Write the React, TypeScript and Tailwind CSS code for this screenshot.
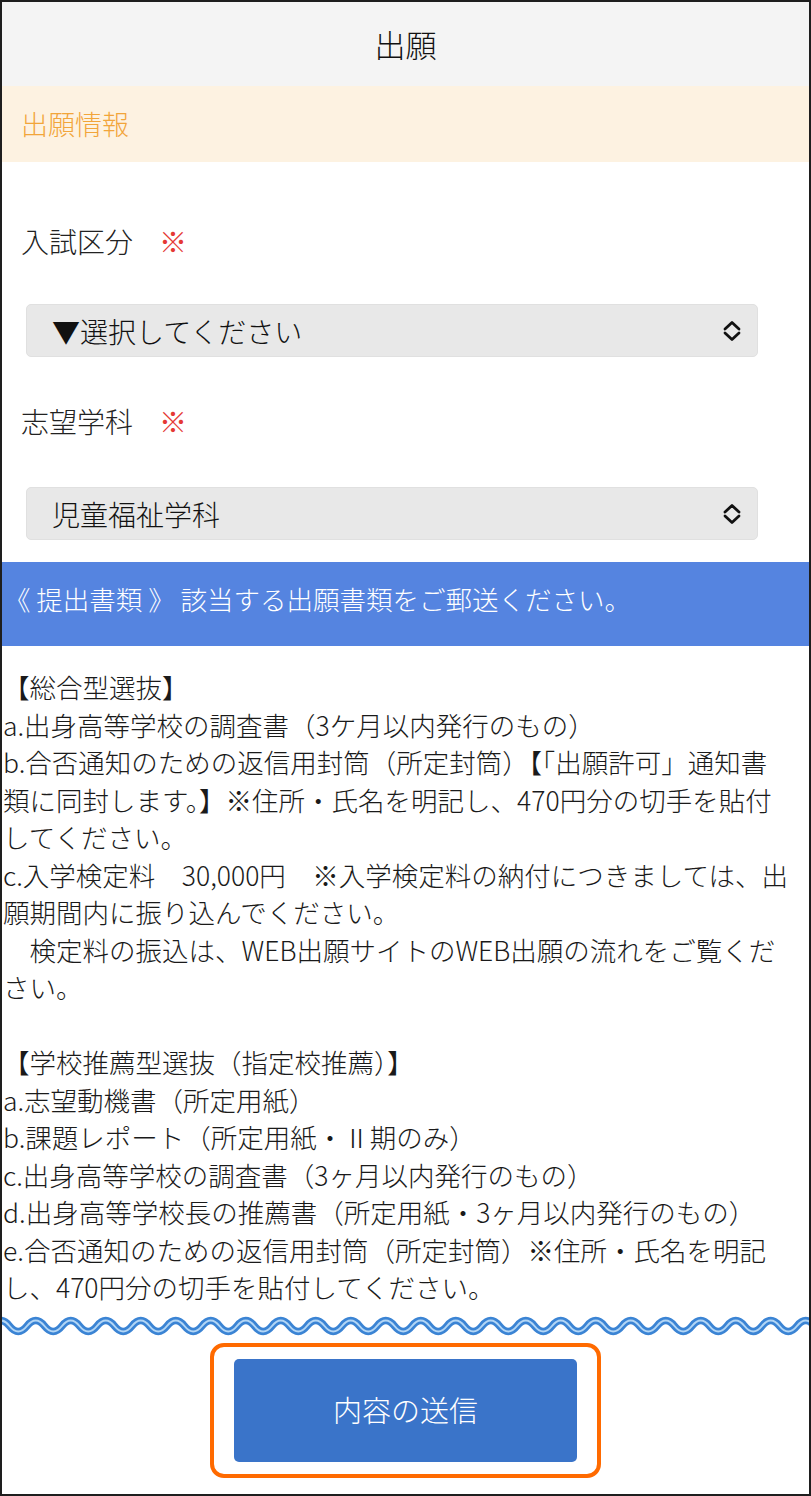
import React from 'react';

const lines: string[] = [
  '【総合型選抜】',
  'a.出身高等学校の調査書（3ケ月以内発行のもの）',
  'b.合否通知のための返信用封筒（所定封筒）【「出願許可」通知書',
  '類に同封します。】※住所・氏名を明記し、470円分の切手を貼付',
  'してください。',
  'c.入学検定料　30,000円　※入学検定料の納付につきましては、出',
  '願期間内に振り込んでください。',
  '　検定料の振込は、WEB出願サイトのWEB出願の流れをご覧くだ',
  'さい。',
  '',
  '【学校推薦型選抜（指定校推薦）】',
  'a.志望動機書（所定用紙）',
  'b.課題レポート（所定用紙・Ⅱ期のみ）',
  'c.出身高等学校の調査書（3ヶ月以内発行のもの）',
  'd.出身高等学校長の推薦書（所定用紙・3ヶ月以内発行のもの）',
  'e.合否通知のための返信用封筒（所定封筒）※住所・氏名を明記',
  'し、470円分の切手を貼付してください。',
];

function Chevrons() {
  return (
    <svg width="22" height="24" viewBox="0 0 22 24" fill="none" stroke="#111" strokeWidth="2.8" strokeLinecap="round" strokeLinejoin="round">
      <path d="M4 10 L11 3.5 L18 10" />
      <path d="M4 14 L11 20.5 L18 14" />
    </svg>
  );
}

function FakeSelect({ value }: { value: string }) {
  return (
    <div className="ml-[24px] w-[732px] h-[53px] rounded-[5px] bg-[#e8e8e8] border border-[#e0e0e0] flex items-center justify-between pl-[25px] pr-[14px] text-[28px] leading-[40px] text-[#111]">
      <span>{value}</span>
      <Chevrons />
    </div>
  );
}

function Wave() {
  const period = 35;
  let d = 'M-10 12';
  for (let x = -10; x < 830; x += period) {
    d += ` Q${x + period / 4} 1 ${x + period / 2} 12 Q${x + (3 * period) / 4} 23 ${x + period} 12`;
  }
  return (
    <svg width="807" height="24" viewBox="0 0 807 24" className="block">
      <path d={d} fill="none" stroke="#3b84d4" strokeWidth="7.5" />
      <path d={d} fill="none" stroke="#b3d6f5" strokeWidth="2" />
    </svg>
  );
}

export default function App() {
  return (
    <div className="w-[811px] h-[1496px] border-2 border-[#1e1e1e] bg-white flex flex-col overflow-hidden font-['Noto_Sans_CJK_JP',sans-serif] font-light text-[#1a1a1a]">
      <header className="h-[84px] shrink-0 bg-[#f4f4f4] flex items-center justify-center text-[31px] text-[#111]">
        出願
      </header>
      <div className="h-[76px] shrink-0 bg-[#fdf2e1] flex items-center pl-[19px] text-[27px] text-[#f2a53a]">
        出願情報
      </div>

      <div className="pt-[59px] flex flex-col">
        <div className="h-[40px] flex items-center pl-[19px] text-[28px] leading-[40px] text-[#222]">
          入試区分
          <span className="ml-[26px] text-[#e53935]">※</span>
        </div>
        <div className="mt-[43px]">
          <FakeSelect value="▼選択してください" />
        </div>
        <div className="mt-[44px] h-[40px] flex items-center pl-[19px] text-[28px] leading-[40px] text-[#222]">
          志望学科
          <span className="ml-[26px] text-[#e53935]">※</span>
        </div>
        <div className="mt-[46px]">
          <FakeSelect value="児童福祉学科" />
        </div>
      </div>

      <div className="mt-[22px] h-[84px] shrink-0 bg-[#5584e0] pt-[18px] pl-[2px] text-white text-[26.5px] leading-[37.5px] whitespace-nowrap">
        《 提出書類 》 該当する出願書類をご郵送ください。
      </div>

      <div className="pt-[22px] pl-[1px] text-[26.5px] leading-[37.5px]">
        {lines.map((line, i) => (
          <div key={i} className="whitespace-nowrap h-[37.5px]">
            {line}
          </div>
        ))}
      </div>

      <div className="mt-[8px]">
        <Wave />
      </div>

      <div className="mt-[5px] flex justify-center">
        <div className="w-[391px] h-[135px] border-4 border-[#ff6a00] rounded-[14px] flex items-center justify-center">
          <button className="w-[343px] h-[103px] rounded-[5px] bg-[#3a74c9] text-white text-[29px] font-light">
            内容の送信
          </button>
        </div>
      </div>
    </div>
  );
}
